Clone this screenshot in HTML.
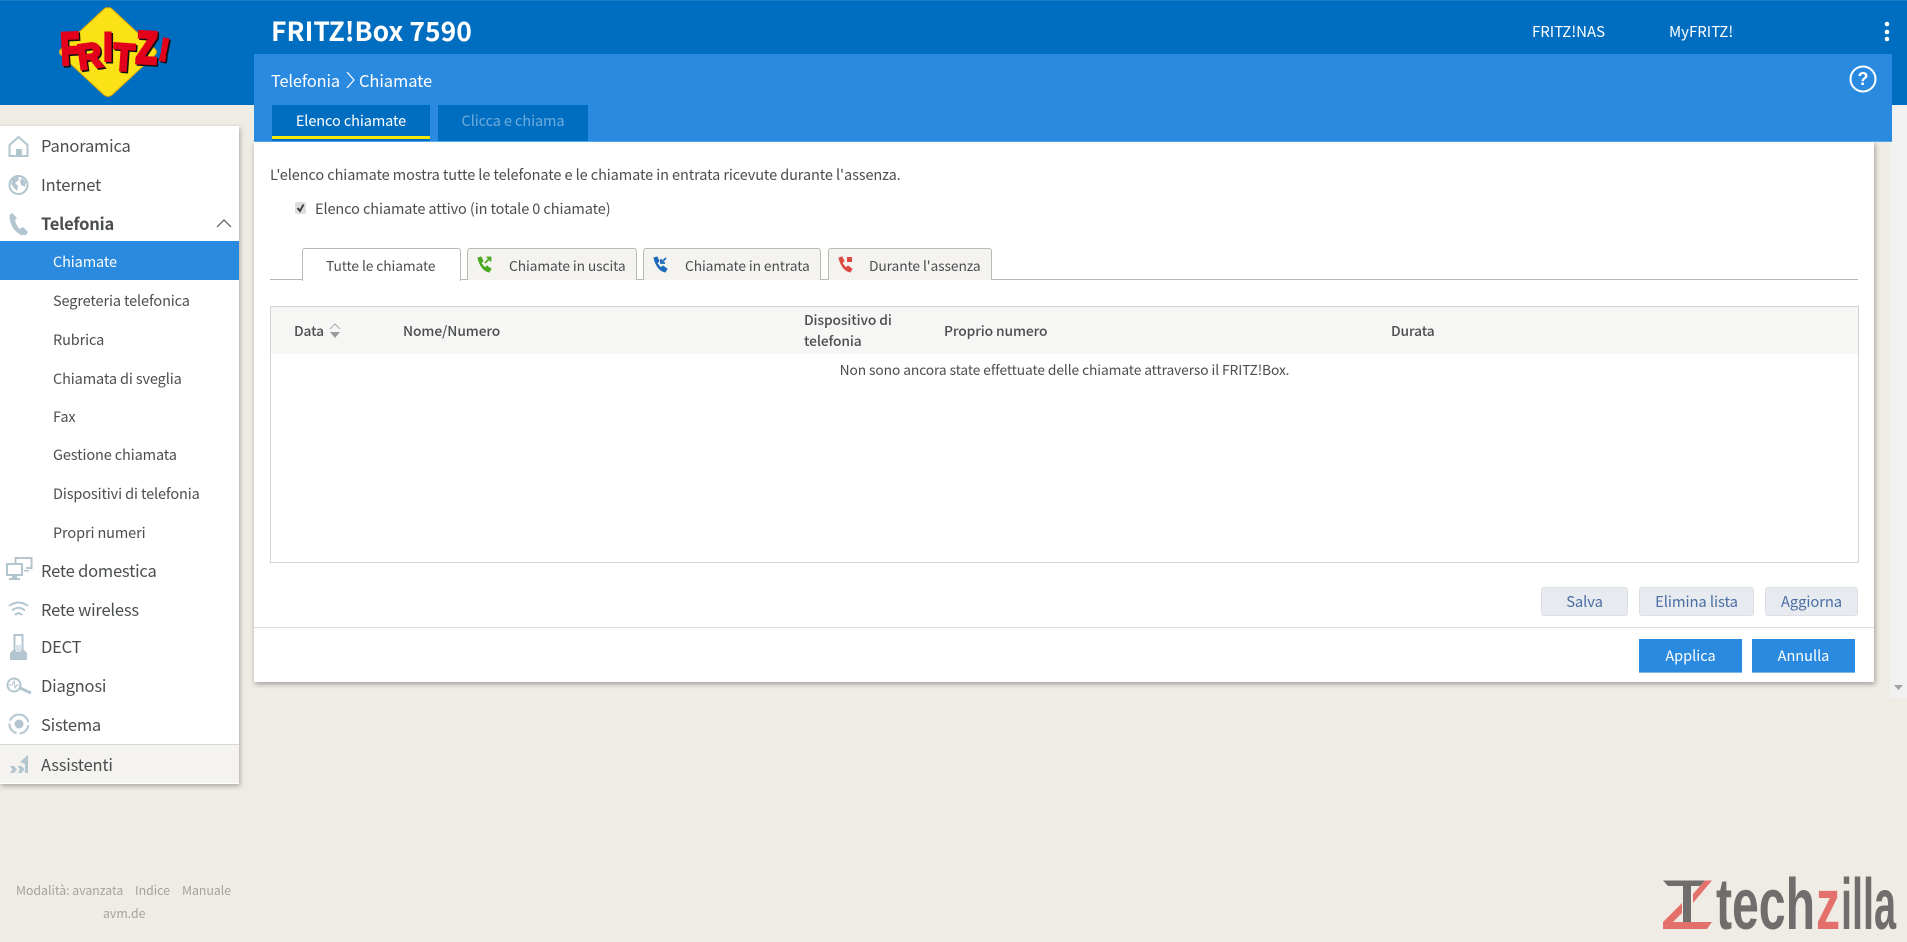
<!DOCTYPE html>
<html lang="it"><head><meta charset="utf-8"><title>FRITZ!Box 7590</title>
<style>
html,body{margin:0;padding:0;width:1907px;height:942px;overflow:hidden;background:#efece5}
body{position:relative;font-family:"Noto Sans CJK JP","Liberation Sans",sans-serif;color:#4b4e50;font-size:14.5px;letter-spacing:-.09px}
div,span.t{position:absolute}
.t{position:absolute;white-space:nowrap;line-height:22px;height:22px}
.m{font-size:16.5px;letter-spacing:-.2px}
.s{font-size:14.5px;letter-spacing:-.12px}
.k{font-size:13.8px;letter-spacing:-.1px}
.f{font-size:12.3px;color:#a5a39d;letter-spacing:0}
.w{color:#fff}
svg{position:absolute;overflow:visible}
.ic{fill:#b3c6d0;stroke:none}
.il{fill:none;stroke:#b3c6d0;stroke-width:2}
.tab{background:#f4f3ef;border:1px solid #b9b9b5;border-bottom:none;border-radius:3px 3px 0 0;box-sizing:border-box}
.btn{background:#e7eaef;border:1px solid #dcdfe3;border-radius:3px;box-sizing:border-box;color:#4a6ea5;text-align:center;line-height:27px;font-size:14.8px;white-space:nowrap}
.pb{background:#2a8adf;color:#fff;text-align:center;line-height:33px;font-size:14.5px;white-space:nowrap;border-bottom:1px solid #7ab8ee;letter-spacing:0}
</style></head><body>

<!-- header -->
<div style="left:0;top:0;width:1907px;height:105px;background:#006ec0;border-top:1px solid #1a7cc6;box-sizing:border-box"></div>

<!-- logo -->
<svg style="left:0;top:0" width="200" height="105" viewBox="0 0 200 105">
<path d="M108 8 Q110 7 112 9 L155 49 Q158 52 155 55 L112 95 Q108 98 104 95 L61 55 Q58 52 61 49 L104 9 Q106 7 108 8Z" fill="#fbe216" stroke="#d9a40a" stroke-width="1"/>
<g font-family="'Liberation Sans',sans-serif" font-weight="700" font-size="45" fill="#111" stroke="#111" stroke-width="3.500">
<text transform="translate(63,66) rotate(-3) scale(.68,1)">F</text>
<text transform="translate(81,71) rotate(-8) scale(.74,.78)">R</text>
<text transform="translate(105,62) scale(.72,.88)">I</text>
<text transform="translate(114,71) rotate(4) scale(.76,.84)">T</text>
<text transform="translate(137,64) rotate(3) scale(.76,1)">Z</text>
<text transform="translate(159,61) rotate(10) scale(.65,.7)">!</text>
</g>
<g font-family="'Liberation Sans',sans-serif" font-weight="700" font-size="45" fill="#e2001a" stroke="#e2001a" stroke-width="3.500">
<text transform="translate(61.500,64.500) rotate(-3) scale(.68,1)">F</text>
<text transform="translate(79.500,69.500) rotate(-8) scale(.74,.78)">R</text>
<text transform="translate(103.500,60.500) scale(.72,.88)">I</text>
<text transform="translate(112.500,69.500) rotate(4) scale(.76,.84)">T</text>
<text transform="translate(135.500,62.500) rotate(3) scale(.76,1)">Z</text>
<text transform="translate(157.500,59.500) rotate(10) scale(.65,.7)">!</text>
</g>
</svg>

<span class="t w" style="left:271px;top:14px;height:32px;line-height:32px;font-size:26.5px;font-weight:700;letter-spacing:0">FRITZ!Box 7590</span>
<span class="t w" style="left:1532px;top:21px;font-size:15px;letter-spacing:0">FRITZ!NAS</span>
<span class="t w" style="left:1669px;top:21px;font-size:15px;letter-spacing:0">MyFRITZ!</span>
<svg style="left:1880px;top:20px" width="14" height="24"><circle cx="7" cy="4" r="2.300" fill="#fff"/><circle cx="7" cy="12" r="2.300" fill="#fff"/><circle cx="7" cy="19" r="2.300" fill="#fff"/></svg>

<!-- sidebar -->
<div style="left:0;top:126px;width:239px;height:658px;background:#fff;box-shadow:1px 2px 5px rgba(0,0,0,.3)"></div>
<div style="left:0;top:744px;width:239px;height:38px;background:#f4f3ef;border-top:1px solid #d8d8d6"></div>
<div style="left:0;top:241px;width:239px;height:39px;background:#2a8adf"></div>

<span class="t m" style="left:41px;top:134px">Panoramica</span>
<span class="t m" style="left:41px;top:173px">Internet</span>
<span class="t m" style="left:41px;top:212px;font-weight:700">Telefonia</span>
<svg style="left:216px;top:217px" width="16" height="12"><path d="M1 10 L8 3 L15 10" fill="none" stroke="#555" stroke-width="1.200"/></svg>
<span class="t s w" style="left:53px;top:251px">Chiamate</span>
<span class="t s" style="left:53px;top:290px">Segreteria telefonica</span>
<span class="t s" style="left:53px;top:329px">Rubrica</span>
<span class="t s" style="left:53px;top:368px">Chiamata di sveglia</span>
<span class="t s" style="left:53px;top:406px">Fax</span>
<span class="t s" style="left:53px;top:444px">Gestione chiamata</span>
<span class="t s" style="left:53px;top:483px">Dispositivi di telefonia</span>
<span class="t s" style="left:53px;top:522px">Propri numeri</span>
<span class="t m" style="left:41px;top:559px">Rete domestica</span>
<span class="t m" style="left:41px;top:598px">Rete wireless</span>
<span class="t m" style="left:41px;top:635px">DECT</span>
<span class="t m" style="left:41px;top:674px">Diagnosi</span>
<span class="t m" style="left:41px;top:713px">Sistema</span>
<span class="t m" style="left:41px;top:753px">Assistenti</span>

<!-- sidebar icons -->
<svg style="left:8px;top:135px" width="22" height="24"><path class="il" d="M1.500 21 V10 L10.500 2 L19.500 10 V21Z"/><rect class="ic" x="8" y="14" width="6" height="7"/></svg>
<svg style="left:8px;top:174px" width="22" height="22"><circle cx="10.500" cy="11" r="9" class="il"/><path class="ic" d="M5 4 L10 2 L11 6 L7 9 L10 12 L9 17 L6 14 L3 10Z M14 4 L18 8 L17 13 L13 11 L12 7Z"/></svg>
<svg style="left:8px;top:211px" width="22" height="26"><path d="M4 2 L1.500 4 C1 11 5 20 13 24 L18 24 L20 21 L15 16 L11.500 18 C9 15 7.500 12 7 9 L9 7Z" class="ic"/></svg>
<svg style="left:6px;top:557px" width="27" height="24"><path class="il" stroke-width="1.500" d="M9.500 6 V1 H25.500 V11 H20"/><rect class="il" x="1" y="7" width="15" height="11" stroke-width="1.500"/><rect class="ic" x="6" y="18" width="5" height="3"/><rect class="ic" x="3" y="21" width="11" height="2"/><rect class="ic" x="18" y="13" width="5" height="1.500"/></svg>
<svg style="left:8px;top:600px" width="22" height="18"><path class="il" stroke-width="2.500" d="M1 6 Q10.500 -1 20 6"/><path class="il" stroke-width="2.500" d="M4 10.500 Q10.500 5 17 10.500"/><path class="il" stroke-width="2.500" d="M7 15 Q10.500 11.500 14 15"/></svg>
<svg style="left:10px;top:634px" width="19" height="28"><rect class="il" x="4.500" y="1" width="8" height="17" stroke-width="1.700"/><path class="ic" d="M3 16 H14 L17 19 V26 H0 V19Z"/><rect x="6" y="11" width="5" height="7" fill="#d9e3e8"/></svg>
<svg style="left:5px;top:676px" width="27" height="20"><circle cx="9" cy="9" r="6.500" class="il"/><path d="M4 9 H7 L9 5 L10 12 L12 9 H14" fill="none" stroke="#b3c6d0" stroke-width="1"/><path d="M15 12 L26 17" stroke="#b3c6d0" stroke-width="3" fill="none"/></svg>
<svg style="left:8px;top:712px" width="22" height="24"><circle cx="11" cy="12" r="4.500" class="ic"/><path class="il" stroke-width="1.500" stroke-dasharray="13 3" d="M11 2.500 A9.500 9.500 0 1 1 10.900 2.500"/></svg>
<svg style="left:9px;top:753px" width="22" height="22"><path class="ic" d="M1 13 H5 L8 16.500 L5 20 H1 L3.500 16.500Z M8.500 13 H12.500 L15.500 16.500 L12.500 20 H8.500 L11 16.500Z"/><path class="ic" d="M11 9 L19 2 V20 H16 V11Z"/></svg>

<!-- footer links -->
<span class="t f" style="left:16px;top:879px">Modalità: avanzata</span>
<span class="t f" style="left:135px;top:879px">Indice</span>
<span class="t f" style="left:182px;top:879px">Manuale</span>
<span class="t f" style="left:103px;top:902px">avm.de</span>

<!-- scrollbar strip -->
<div style="left:1890px;top:105px;width:17px;height:593px;background:#f1f1f1"></div>
<svg style="left:1894px;top:685px" width="10" height="6"><path d="M0 0 H9 L4.500 5Z" fill="#a3a3a3"/></svg>

<!-- main panel -->
<div style="left:254px;top:142px;width:1620px;height:540px;background:#fff;box-shadow:1px 2px 5px rgba(0,0,0,.35)"></div>

<!-- sub header (above the panel shadow and the strip) -->
<div style="left:254px;top:54px;width:1638px;height:88px;background:#2a8adf;border-bottom:1px solid #55a5e8;box-sizing:border-box"></div>
<span class="t w" style="left:271px;top:69px;font-size:16.3px">Telefonia</span>
<svg style="left:346px;top:71px" width="10" height="18"><path d="M1 1 L8 9 L1 17" fill="none" stroke="#fff" stroke-width="1.200"/></svg>
<span class="t w" style="left:359px;top:69px;font-size:16.5px">Chiamate</span>
<svg style="left:1849px;top:65px" width="28" height="28"><circle cx="14" cy="14" r="12.500" fill="none" stroke="#fff" stroke-width="2"/><text x="14" y="20" text-anchor="middle" font-family="'Liberation Sans',sans-serif" font-weight="700" font-size="18" fill="#fff">?</text></svg>
<div style="left:272px;top:105px;width:158px;height:36px;background:#006ec0"></div>
<div style="left:272px;top:136px;width:158px;height:3px;background:#f5e800"></div>
<span class="t w" style="left:272px;width:158px;text-align:center;top:110px;font-size:14.5px">Elenco chiamate</span>
<div style="left:438px;top:105px;width:150px;height:36px;background:#006ec0"></div>
<span class="t" style="left:438px;width:150px;text-align:center;top:110px;font-size:14.5px;color:#6fadde">Clicca e chiama</span>

<span class="t" style="left:270px;top:164px">L'elenco chiamate mostra tutte le telefonate e le chiamate in entrata ricevute durante l'assenza.</span>
<svg style="left:295px;top:202px" width="11" height="12"><rect width="11" height="12" rx="2" fill="#dedede"/><path d="M2.500 6 L5 9 L8.500 2.500" fill="none" stroke="#333" stroke-width="1.800"/></svg>
<span class="t" style="left:315px;top:198px">Elenco chiamate attivo (in totale 0 chiamate)</span>

<!-- filter tabs -->
<div style="left:270px;top:279px;width:1588px;height:1px;background:#b9b9b5"></div>
<div class="tab" style="left:302px;top:248px;width:159px;height:33px;background:#fff"></div>
<div class="tab" style="left:467px;top:248px;width:170px;height:32px"></div>
<div class="tab" style="left:643px;top:248px;width:178px;height:32px"></div>
<div class="tab" style="left:828px;top:248px;width:164px;height:32px"></div>
<span class="t k" style="left:326px;top:254px">Tutte le chiamate</span>
<span class="t k" style="left:509px;top:254px">Chiamate in uscita</span>
<span class="t k" style="left:685px;top:254px">Chiamate in entrata</span>
<span class="t k" style="left:869px;top:254px">Durante l'assenza</span>
<svg style="left:477px;top:256px" width="16" height="17"><path d="M1 2 L4 1 L6 5 L4 7 Q6 10 8 12 L10 10 L14 13 L12 16 Q4 14 1 2Z" fill="#4aa81f" stroke="#4aa81f"/><path d="M8 7 L13 2 M9.500 1.500 H13.500 V5.500" fill="none" stroke="#4aa81f" stroke-width="1.800"/></svg>
<svg style="left:653px;top:256px" width="16" height="17"><path d="M1 2 L4 1 L6 5 L4 7 Q6 10 8 12 L10 10 L14 13 L12 16 Q4 14 1 2Z" fill="#1c6bbd" stroke="#1c6bbd"/><path d="M13 2 L8 7 M8 3 V7 H12" fill="none" stroke="#1c6bbd" stroke-width="1.800"/></svg>
<svg style="left:838px;top:256px" width="16" height="17"><path d="M1 2 L4 1 L6 5 L4 7 Q6 10 8 12 L10 10 L14 13 L12 16 Q4 14 1 2Z" fill="#dd4a44" stroke="#dd4a44"/><rect x="9" y="1" width="5" height="5" fill="#dd4a44"/></svg>

<!-- table -->
<div style="left:270px;top:306px;width:1589px;height:257px;border:1px solid #d3d3cf;box-sizing:border-box;background:#fff"></div>
<div style="left:271px;top:307px;width:1587px;height:47px;background:#f6f6f4"></div>
<span class="t k" style="left:294px;top:319px;font-weight:500">Data</span>
<svg style="left:329px;top:323px" width="12" height="16"><path d="M1 6 L6 1 L11 6" fill="none" stroke="#aaa" stroke-width="1"/><path d="M1 9 H11 L6 15Z" fill="#9a9a9a"/></svg>
<span class="t k" style="left:403px;top:319px;font-weight:500">Nome/Numero</span>
<span class="t k" style="left:804px;top:308px;font-weight:500">Dispositivo di</span>
<span class="t k" style="left:804px;top:329px;font-weight:500">telefonia</span>
<span class="t k" style="left:944px;top:319px;font-weight:500">Proprio numero</span>
<span class="t k" style="left:1391px;top:319px;font-weight:500">Durata</span>
<span class="t k" style="left:271px;width:1587px;text-align:center;top:358px">Non sono ancora state effettuate delle chiamate attraverso il FRITZ!Box.</span>

<!-- buttons -->
<div class="btn" style="left:1541px;top:587px;width:87px;height:29px">Salva</div>
<div class="btn" style="left:1639px;top:587px;width:115px;height:29px">Elimina lista</div>
<div class="btn" style="left:1765px;top:587px;width:93px;height:29px">Aggiorna</div>
<div style="left:254px;top:627px;width:1620px;height:1px;background:#dcdcda"></div>
<div class="pb" style="left:1639px;top:639px;width:103px;height:33px">Applica</div>
<div class="pb" style="left:1752px;top:639px;width:103px;height:33px">Annulla</div>

<!-- watermark -->
<svg style="left:1660px;top:870px" width="240" height="65" viewBox="0 0 240 65">
<path d="M3 10.500 H45 L40 16 H31 V52 H23 V16 H8Z" fill="#6f6e6c"/>
<path d="M45 10.500 H52 L33 33 V24Z M3 52 L22 33 V43 L13 52 H52 L47 59 H3Z" fill="#e4706b"/>
<g font-family="'Liberation Sans',sans-serif" font-size="72" font-weight="700" fill="#6f6e6c">
<text x="56" y="59" textLength="99" lengthAdjust="spacingAndGlyphs">tech</text>
<text x="156" y="59" textLength="24" lengthAdjust="spacingAndGlyphs" fill="#e4706b">z</text>
<text x="181" y="59" textLength="55" lengthAdjust="spacingAndGlyphs">illa</text>
</g>
</svg>
</body></html>
